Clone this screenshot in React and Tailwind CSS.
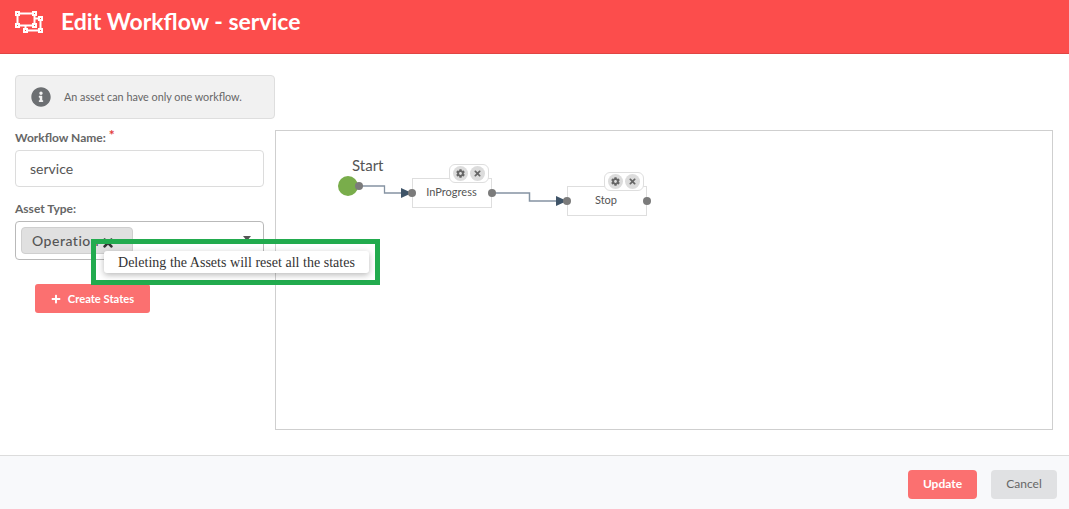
import React from "react";
import { FaCog, FaTimes, FaPlus, FaInfoCircle } from "react-icons/fa";

function Port({ className }) {
  return <span className={"absolute w-2 h-2 rounded-full bg-[#7b7b7b] " + className} />;
}

function Node({ left, top, label, textClass }) {
  return (
    <div className="absolute w-[80px] h-[30px] border border-[#dedede] bg-white flex items-center justify-center text-[11px] text-[#555]" style={{ left, top }}>
      <span className={"mb-[2px] " + textClass}>{label}</span>
      <div className="absolute left-[36px] top-[-15px] w-[40px] h-[19px] border border-[#dedede] rounded-[6px] bg-white flex items-center justify-center gap-[2px]">
        <span className="w-[15px] h-[15px] rounded-full bg-[#dcdcdc] flex items-center justify-center">
          <FaCog size={9} className="text-[#666]" />
        </span>
        <span className="w-[15px] h-[15px] rounded-full bg-[#dcdcdc] flex items-center justify-center">
          <FaTimes size={9} className="text-[#666]" />
        </span>
      </div>
      <Port className="left-[-5px] top-[10px]" />
      <Port className="right-[-5px] top-[10px]" />
    </div>
  );
}

export default function App() {
  return (
    <div className="relative w-[1069px] h-[509px] flex flex-col bg-white overflow-hidden font-['Lato','Liberation_Sans',sans-serif]">
      <header className="h-[54px] shrink-0 bg-[#fc4d4c] border-b border-[#e04543] flex items-start pl-[15px]">
        <svg width="30" height="24" viewBox="0 0 30 24" className="mt-[10px]" fill="#fc4d4c" stroke="#ffffff" strokeWidth="2">
          <path d="M2.500 3.500H19.500V15.500H2.500Z" fill="none" />
          <path d="M19.500 8.500H25.500V20.500H10.500V15.500" fill="none" />
          <rect x="1" y="2" width="3" height="3" />
          <rect x="18" y="2" width="3" height="3" />
          <rect x="1" y="14" width="3" height="3" />
          <rect x="18" y="14" width="3" height="3" />
          <rect x="24" y="7" width="3" height="3" />
          <rect x="24" y="19" width="3" height="3" />
          <rect x="9" y="19" width="3" height="3" />
        </svg>
        <h1 className="ml-[16px] mt-[5px] text-[23px] leading-[32px] font-bold text-white">Edit Workflow - service</h1>
      </header>

      <main className="flex-1 flex pl-[15px] pt-[21px]">
        <section className="w-[260px] shrink-0">
          <div className="h-[44px] rounded-[4px] bg-[#f1f1f1] border border-[#dedede] flex items-center pl-[15px] gap-[13px] text-[10.800px] text-[#666]">
            <FaInfoCircle size={20} className="text-[#6c6f72]" />
            An asset can have only one workflow.
          </div>

          <label className="block mt-[12px] text-[12px] leading-[14px] font-bold text-[#666]">
            Workflow Name: <span className="relative top-[-2px] text-[14px] leading-[0] text-[#e23b3b]">*</span>
          </label>
          <div className="mt-[5px] w-[249px] h-[37px] rounded-[4px] border border-[#dcdcdc] flex items-center pl-[14px] text-[14px] text-[#555]">service</div>

          <label className="block mt-[15px] text-[12px] leading-[14px] font-bold text-[#666]">Asset Type:</label>
          <div className="mt-[5px] w-[249px] h-[39px] rounded-[4px] border border-[#b9b9b9] relative pl-[5px] pt-[5px]">
            <div className="w-[112px] h-[27px] rounded-[4px] bg-[#e0e0e0] border border-[#cfcfcf] flex items-center pl-[10px] text-[14px] font-medium tracking-[0.5px] text-[#555] overflow-hidden">
              Operation
            </div>
            <FaTimes size={14} className="absolute left-[85px] top-[14px] text-[#333]" />
            <span className="absolute right-[12px] top-[14px] w-0 h-0 border-x-[4px] border-x-transparent border-t-[5px] border-t-[#555]" />
          </div>

          <button className="mt-[24px] ml-[20px] w-[115px] h-[29px] pt-[1px] rounded-[3px] bg-[#fb7070] flex items-center justify-center gap-[7px] text-[11.200px] font-bold text-white">
            <FaPlus size={10} />
            Create States
          </button>
        </section>

        <section className="relative mt-[55px] w-[778px] h-[300px] border border-[#cfcfcf] bg-white">
          <svg className="absolute left-0 top-0" width="778" height="120" fill="none">
            <path d="M83 55H108.500V62H128" stroke="#8593a2" strokeWidth="1.300" />
            <path d="M125 57L136 62L125 67Z" fill="#3f5468" />
            <path d="M217 62H253.500V70H283" stroke="#8593a2" strokeWidth="1.500" />
            <path d="M280 65L291 70L280 75Z" fill="#3f5468" />
          </svg>
          <span className="absolute left-[76px] top-[25px] text-[15px] leading-[18px] text-[#555]">Start</span>
          <span className="absolute left-[62px] top-[45px] w-5 h-5 rounded-full bg-[#79ad4b]" />
          <Port className="left-[79px] top-[51px]" />
          <Node left={136} top={47} label="InProgress" textClass="mr-[1px]" />
          <Node left={291} top={55} label="Stop" textClass="mr-[2px]" />
        </section>
      </main>

      <footer className="h-[54px] shrink-0 bg-[#f8f9fb] border-t border-[#dcdcdc] flex items-center justify-end gap-[14px] pr-[12px] pt-[3px]">
        <button className="w-[69px] h-[29px] rounded-[4px] bg-[#fb7070] text-[12px] font-bold text-white">Update</button>
        <button className="w-[66px] h-[29px] rounded-[4px] bg-[#e0e1e3] text-[12px] text-[#666]">Cancel</button>
      </footer>

      <div className="absolute left-[91px] top-[239px] w-[289px] h-[46px] border-[5px] border-[#22ab4e] pl-[8px] pt-[7px]">
        <div className="w-[265px] h-[22px] rounded-[3px] bg-white shadow-[0_2px_6px_rgba(0,0,0,0.28)] flex items-center pl-[14px] font-['Liberation_Serif',serif] text-[14px] tracking-[0.02px] text-[#333] whitespace-nowrap">
          Deleting the Assets will reset all the states
        </div>
      </div>
    </div>
  );
}
